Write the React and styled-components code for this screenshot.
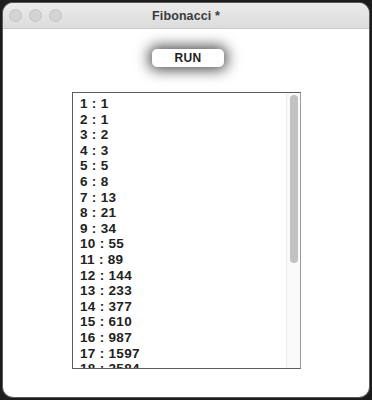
import styled, { createGlobalStyle } from "styled-components"

const fib = () => {
    const out = []
    let a = 1
    let b = 1
    for (let i = 1; i <= 18; i++) {
        out.push([i, a])
        const c = a + b
        a = b
        b = c
    }
    return out
}

export default function App() {
    return (
        <>
            <Global />
            <Window>
                <TitleBar>
                    <Lights>
                        <Light />
                        <Light />
                        <Light />
                    </Lights>
                    <Title>Fibonacci *</Title>
                </TitleBar>
                <Body>
                    <RunButton>RUN</RunButton>
                    <ListBox>
                        <Lines>
                            {fib().map(([n, v]) => (
                                <Line key={n}>{n} : {v}</Line>
                            ))}
                        </Lines>
                        <Track>
                            <Thumb />
                        </Track>
                    </ListBox>
                </Body>
            </Window>
        </>
    )
}

const Global = createGlobalStyle`
    html, body {
        margin: 0;
        padding: 0;
        background: #1c1c1c;
    }
    body {
        width: 372px;
        height: 400px;
        overflow: hidden;
        font-family: 'Liberation Sans', Arial, sans-serif;
    }
`
const Window = styled.div`
    margin: 3px;
    height: 394px;
    background: #ffffff;
    border-radius: 10px;
    overflow: hidden;
    box-shadow: 0 0 0 1px #5a5a5a;
    display: flex;
    flex-direction: column;
`
const TitleBar = styled.div`
    position: relative;
    height: 25px;
    flex-shrink: 0;
    background: linear-gradient(#ebebeb, #dcdcdc);
    border-bottom: 1px solid #c9c9c9;
    display: flex;
    align-items: center;
    justify-content: center;
`
const Lights = styled.div`
    position: absolute;
    left: 6px;
    top: 6px;
    display: flex;
    gap: 7px;
`
const Light = styled.div`
    width: 11px;
    height: 11px;
    border-radius: 50%;
    background: #d3d3d3;
    border: 0.5px solid #c4c4c4;
`
const Title = styled.div`
    font-size: 12.5px;
    font-weight: 700;
    color: #3a3a3a;
    letter-spacing: 0.1px;
`
const Body = styled.div`
    flex: 1;
    display: flex;
    flex-direction: column;
    align-items: center;
    padding-top: 20px;
`
const RunButton = styled.div`
    width: 72px;
    height: 18px;
    margin-left: 4px;
    border-radius: 5px;
    background: #ffffff;
    box-shadow: 0 0 14px 3px rgba(0, 0, 0, 0.7);
    display: flex;
    align-items: center;
    justify-content: center;
    font-size: 12px;
    font-weight: 700;
    color: #222;
    letter-spacing: 0.4px;
`
const ListBox = styled.div`
    margin-top: 25px;
    margin-left: 1px;
    width: 227px;
    height: 275px;
    border: 1px solid #5c5c5c;
    border-right-color: #9a9a9a;
    display: flex;
    overflow: hidden;
`
const Lines = styled.div`
    flex: 1;
    padding: 3px 0 0 7px;
    overflow: hidden;
`
const Line = styled.div`
    font-size: 13.5px;
    line-height: 15.6px;
    font-weight: 700;
    color: #222;
    letter-spacing: 0.3px;
    white-space: nowrap;
`
const Track = styled.div`
    width: 14px;
    flex-shrink: 0;
    background: #fafafa;
    border-left: 1px solid #ececec;
    padding: 2px 0 0 3px;
    box-sizing: border-box;
`
const Thumb = styled.div`
    width: 8px;
    height: 168px;
    border-radius: 4px;
    background: #c2c2c2;
`
